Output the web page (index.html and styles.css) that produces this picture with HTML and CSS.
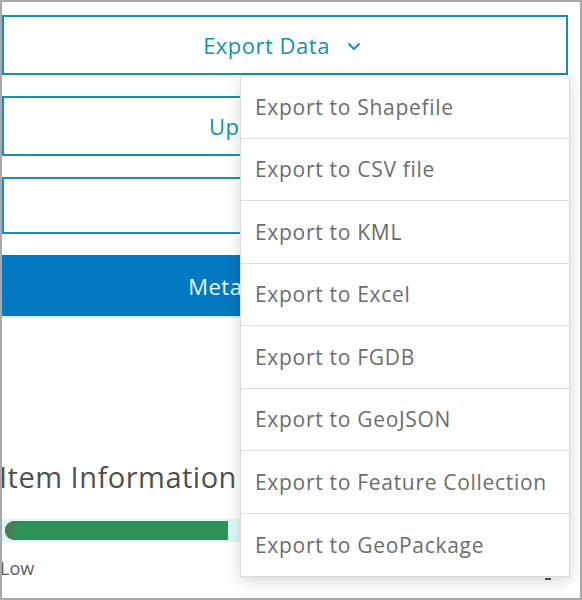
FILE: index.html
```html
<!DOCTYPE html>
<html>
<head>
<meta charset="utf-8">
<link rel="stylesheet" href="styles.css">
</head>
<body>
<div class="frame">
  <div class="content">
    <button class="btn btn-outline btn-export">Export Data
      <svg class="chev" width="14" height="9" viewBox="0 0 14 9"><path d="M1.5 1.5 L7 7 L12.5 1.5" fill="none" stroke="#1590ae" stroke-width="2"/></svg>
    </button>
    <button class="btn btn-outline btn-update">Update Data
      <svg class="chev" width="14" height="9" viewBox="0 0 14 9"><path d="M1.5 1.5 L7 7 L12.5 1.5" fill="none" stroke="#1590ae" stroke-width="2"/></svg>
    </button>
    <button class="btn btn-outline btn-third">Share</button>
    <button class="btn btn-solid">Metadata Details</button>
    <div class="focus-line"></div>
    <h2 class="title">Item Information</h2>
    <div class="meter">
      <div class="meter-bar"></div>
    </div>
    <div class="meter-labels">
      <span class="low">Low</span>
    </div>
  </div>
  <span class="high-mark"></span>
  <ul class="menu">
    <li>Export to Shapefile</li>
    <li>Export to CSV file</li>
    <li>Export to KML</li>
    <li>Export to Excel</li>
    <li>Export to FGDB</li>
    <li>Export to GeoJSON</li>
    <li>Export to Feature Collection</li>
    <li>Export to GeoPackage</li>
  </ul>
</div>
</body>
</html>
```
FILE: styles.css
```css
html, body {
  margin: 0;
  padding: 0;
  background: #ffffff;
}
.frame {
  position: relative;
  width: 582px;
  height: 600px;
  box-sizing: border-box;
  border: 2px solid #a9a9a9;
  overflow: hidden;
  font-family: "Open Sans", "Liberation Sans", sans-serif;
  background: #fff;
}
.content {
  width: 566px;
  padding-top: 13px;
  display: flex;
  flex-direction: column;
}
.btn {
  box-sizing: border-box;
  width: 566px;
  font-family: inherit;
  font-size: 22px;
  letter-spacing: 0.5px;
  display: flex;
  align-items: center;
  justify-content: center;
  gap: 17px;
  margin: 0;
  padding: 0;
}
.btn-outline {
  background: #fff;
  border: 2px solid #1590ae;
  color: #1590ae;
  margin-bottom: 21px;
}
.btn-export { height: 60px; padding-right: 6px; }
.btn-update { height: 60px; padding-left: 14px; }
.btn-third { height: 57px; }
.btn-solid {
  height: 61px;
  background: #0479c2;
  border: none;
  color: #e8f7fb;
  padding-right: 12px;
}
.chev {
  margin-top: 2px;
}
.focus-line {
  height: 2px;
  background: #c9f5f5;
  width: 240px;
}
.title {
  margin: 141px 0 0 -3px;
  font-weight: 400;
  font-size: 29px;
  line-height: 36px;
  color: #4f4f4f;
  letter-spacing: 0.5px;
}
.meter {
  margin-top: 24px;
  height: 23px;
  background: #dcf8f6;
  width: 240px;
  display: flex;
  align-items: center;
}
.meter-bar {
  margin-left: 3px;
  width: 223px;
  height: 19px;
  background: #2e9157;
  border-radius: 10px 0 0 10px;
  box-shadow: inset 10px 0 0 -2px #4c7c53;
}
.meter-labels {
  margin-top: 14px;
  font-size: 18px;
  color: #5e5e5e;
  line-height: 24px;
}
.low {
  margin-left: -2px;
}
.high-mark {
  position: absolute;
  left: 543px;
  top: 576px;
  width: 6px;
  height: 2px;
  background: #555;
}
.menu {
  position: absolute;
  left: 238px;
  top: 74px;
  width: 328px;
  margin: 0;
  padding: 0;
  list-style: none;
  background: #fff;
  border: 1px solid #dadada;
  border-top: none;
  box-shadow: 0 4px 14px rgba(0, 0, 0, 0.16);
}
.menu li {
  box-sizing: border-box;
  height: 62.5px;
  display: flex;
  align-items: center;
  padding-left: 14px;
  font-size: 21px;
  letter-spacing: 0.7px;
  color: #6c6c6c;
  border-bottom: 1px solid #dedede;
}
.menu li:last-child {
  border-bottom: none;
}
```
